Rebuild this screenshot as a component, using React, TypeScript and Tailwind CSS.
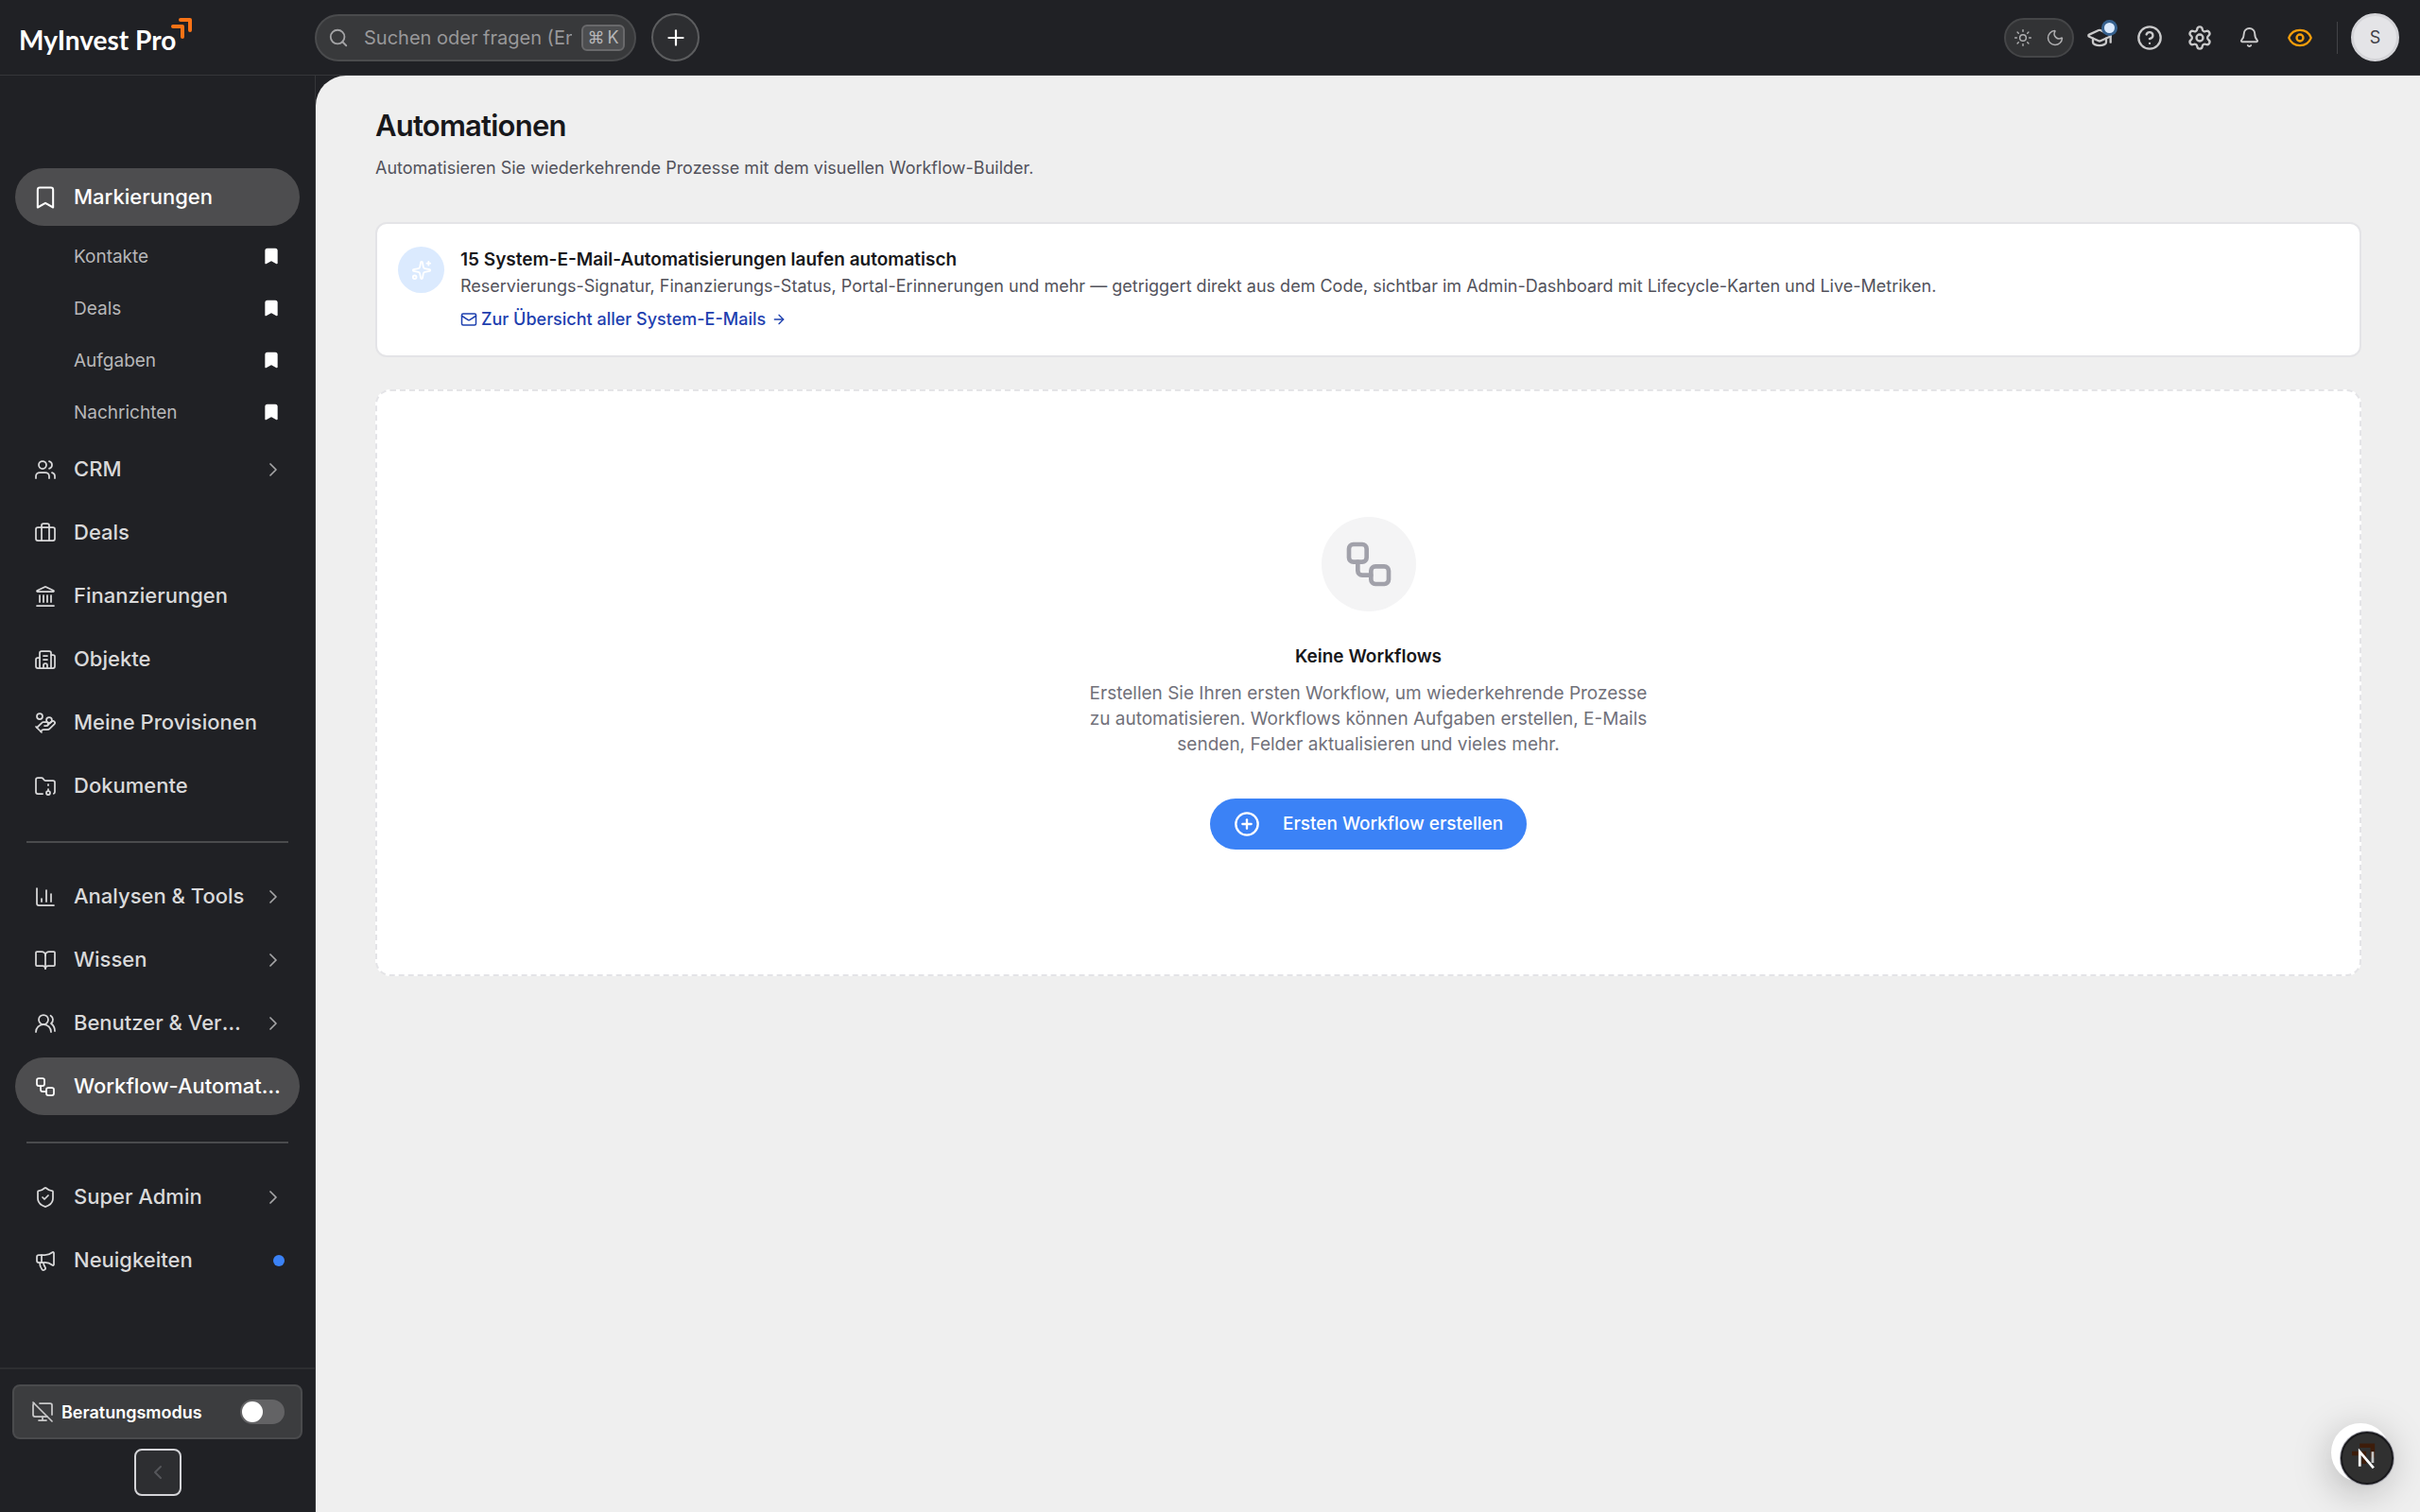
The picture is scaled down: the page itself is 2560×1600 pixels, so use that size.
import React from 'react';
import {
  Bell,
  Bookmark,
  BookOpen,
  Briefcase,
  Building2,
  ChartColumn,
  ChevronLeft,
  ChevronRight,
  ArrowRight,
  CircleQuestionMark,
  CirclePlus,
  Eye,
  FolderArchive,
  GraduationCap,
  HandCoins,
  Landmark,
  Mail,
  Megaphone,
  MonitorOff,
  Moon,
  Plus,
  Search,
  Settings,
  ShieldCheck,
  Sparkles,
  Sun,
  Users,
  UsersRound,
  Workflow,
  type LucideIcon,
} from 'lucide-react';

interface NavItemProps {
  icon: LucideIcon;
  label: string;
  active?: boolean;
  expandable?: boolean;
  dot?: boolean;
  large?: boolean;
}

const bookmarks = ['Kontakte', 'Deals', 'Aufgaben', 'Nachrichten'];

const mainItems: NavItemProps[] = [
  { icon: Users, label: 'CRM', expandable: true },
  { icon: Briefcase, label: 'Deals' },
  { icon: Landmark, label: 'Finanzierungen' },
  { icon: Building2, label: 'Objekte' },
  { icon: HandCoins, label: 'Meine Provisionen' },
  { icon: FolderArchive, label: 'Dokumente' },
];

const toolItems: NavItemProps[] = [
  { icon: ChartColumn, label: 'Analysen & Tools', expandable: true },
  { icon: BookOpen, label: 'Wissen', expandable: true },
  { icon: UsersRound, label: 'Benutzer & Verwaltung', expandable: true },
  { icon: Workflow, label: 'Workflow-Automatisierung', active: true },
];

const adminItems: NavItemProps[] = [
  { icon: ShieldCheck, label: 'Super Admin', expandable: true },
  { icon: Megaphone, label: 'Neuigkeiten', dot: true },
];

const NavItem: React.FC<NavItemProps> = ({ icon: Icon, label, active, expandable, dot, large }) => (
  <button
    className={`flex h-[61px] w-full shrink-0 items-center rounded-full pr-4 pl-[18px] text-left text-[22px] font-medium ${
      active ? 'bg-[#4d4d4f] text-white' : 'text-[#d9d9da]'
    }`}
  >
    <span className="flex w-7 shrink-0 justify-center">
      <Icon className={large ? 'size-7' : 'size-6'} strokeWidth={1.75} />
    </span>
    <span className="ml-4 min-w-0 flex-1 truncate">{label}</span>
    {expandable && <ChevronRight className="ml-2 size-6 shrink-0 text-[#a5a5a7]" strokeWidth={1.75} />}
    {dot && <span className="size-3 shrink-0 rounded-full bg-[#3b82f6]" />}
  </button>
);

const NavGroup: React.FC<{ items: NavItemProps[] }> = ({ items }) => (
  <div className="flex flex-col gap-[6px] px-4">
    {items.map((item) => (
      <NavItem key={item.label} {...item} />
    ))}
  </div>
);

const Logo = () => (
  <a href="#" className="flex w-[333px] shrink-0 items-start pl-5" aria-label="MyInvest Pro">
    <span className="pt-1 font-[Lato,sans-serif] text-[28px] leading-[40px] font-bold text-white">MyInvest Pro</span>
    <svg viewBox="0 0 24 24" className="-ml-[6px] size-6" fill="none" stroke="#f97316" strokeWidth="4" strokeLinejoin="round">
      <path d="M11 3h10v11" strokeLinecap="round" />
      <path d="M3 10h10v11" strokeLinecap="round" />
    </svg>
  </a>
);

const IconButton: React.FC<{ label: string; children: React.ReactNode }> = ({ label, children }) => (
  <button aria-label={label} className="relative flex size-[53px] items-center justify-center text-[#c9c9ca]">
    {children}
  </button>
);

const Header = () => (
  <header className="flex h-20 shrink-0 items-center border-b border-[#353639] bg-[#202125]">
    <Logo />
    <div className="flex h-[50px] w-[340px] items-center rounded-full border-2 border-[#4a4b4d] bg-[#38393b] pr-[10px] pl-3">
      <Search className="size-[22px] shrink-0 text-[#a3a3a5]" />
      <input
        aria-label="Suche"
        placeholder="Suchen oder fragen (Enter)"
        className="ml-4 min-w-0 flex-1 bg-transparent text-[20px] text-white outline-none placeholder:text-[#98989a]"
      />
      <kbd className="ml-[10px] flex h-7 w-[46px] shrink-0 items-center justify-center gap-[3px] rounded-md border-2 border-[#69696b] bg-[#4d4e50] font-[Inter,sans-serif] text-[18px] text-[#b5b5b7]">
        <span>⌘</span>
        <span>K</span>
      </kbd>
    </div>
    <button
      aria-label="Neu"
      className="ml-4 flex size-[51px] items-center justify-center rounded-full border-2 border-[#5c5d5f] bg-[#2d2e31] text-white"
    >
      <Plus className="size-[26px]" />
    </button>
    <div className="ml-auto flex items-center pr-[22px]">
      <button
        aria-label="Farbschema"
        className="flex h-[42px] w-[74px] items-center justify-between rounded-full border-2 border-[#454648] bg-[#323335] px-2 text-[#b0b0b2]"
      >
        <Sun className="size-5" strokeWidth={1.75} />
        <Moon className="size-5" strokeWidth={1.75} />
      </button>
      <div className="flex">
        <IconButton label="Akademie">
          <GraduationCap className="size-7" />
          <span className="absolute top-2 right-[7px] flex size-[17px] items-center justify-center rounded-full bg-[#36618f]">
            <span className="size-[11px] rounded-full bg-[#dbeafe]" />
          </span>
        </IconButton>
        <IconButton label="Hilfe">
          <CircleQuestionMark className="size-7" />
        </IconButton>
        <IconButton label="Einstellungen">
          <Settings className="size-7" />
        </IconButton>
        <IconButton label="Benachrichtigungen">
          <Bell className="size-[23px]" />
        </IconButton>
        <IconButton label="Ansicht">
          <Eye className="size-7 text-[#f59e0b]" />
        </IconButton>
      </div>
      <div className="ml-[13px] h-[34px] w-px bg-[#434447]" />
      <button
        aria-label="Profil"
        className="ml-[14px] flex size-[51px] items-center justify-center rounded-full border-[3px] border-[#d4d4d8] bg-[#e4e4e7] text-[18px] text-[#3f3f46]"
      >
        S
      </button>
    </div>
  </header>
);

const Divider = () => <hr className="mx-7 mt-7 mb-[26px] border-t-2 border-[#4a4b4d]" />;

const Sidebar = () => (
  <aside className="flex w-[334px] shrink-0 flex-col border-r border-[#353639] bg-[#202125]">
    <nav className="flex flex-1 flex-col pt-[98px]">
      <div className="px-4">
        <NavItem icon={Bookmark} label="Markierungen" active large />
      </div>
      <ul className="mt-[6px] mb-[1px]">
        {bookmarks.map((label) => (
          <li key={label}>
            <a href="#" className="flex h-[55px] items-center justify-between pr-9 pl-[78px] text-[19px] text-[#b7b7b9]">
              {label}
              <Bookmark className="mb-1 size-5 fill-white text-white" />
            </a>
          </li>
        ))}
      </ul>
      <NavGroup items={mainItems} />
      <Divider />
      <NavGroup items={toolItems} />
      <Divider />
      <NavGroup items={adminItems} />
    </nav>
    <div className="flex flex-col items-center border-t-2 border-[#2d2e31] px-[13px] pt-4 pb-[17px]">
      <label className="flex h-[58px] w-full items-center rounded-lg border-2 border-[#4a4b4d] bg-[#3c3d3f] pr-[17px] pl-[18px] text-white">
        <MonitorOff className="size-6 text-[#c9c9ca]" strokeWidth={1.75} />
        <span className="ml-2 flex-1 text-[18px] font-semibold">Beratungsmodus</span>
        <input type="checkbox" role="switch" className="peer sr-only" />
        <span className="flex h-[26px] w-[47px] items-center rounded-full bg-[#636365] px-[2px] peer-checked:justify-end">
          <span className="size-[22px] rounded-full bg-white" />
        </span>
      </label>
      <button
        aria-label="Seitenleiste einklappen"
        className="mt-[10px] flex size-[50px] items-center justify-center rounded-lg border-2 border-[#d4d4d8] bg-[#2d2e31] text-[#55565a]"
      >
        <ChevronLeft className="size-6" />
      </button>
    </div>
  </aside>
);

const SystemMailCard = () => (
  <section className="mt-[43px] flex items-start rounded-xl border-2 border-[#e4e4e7] bg-white px-[22px] pt-6 pb-6">
    <div className="flex size-[49px] shrink-0 items-center justify-center rounded-full bg-[#dbeafe] text-white">
      <Sparkles className="size-[22px]" />
    </div>
    <div className="ml-[17px] min-w-0">
      <h2 className="text-[19px] leading-[28px] font-semibold text-[#18181b]">
        15 System-E-Mail-Automatisierungen laufen automatisch
      </h2>
      <p className="text-[18px] leading-[28px] text-[#52525b]">
        Reservierungs-Signatur, Finanzierungs-Status, Portal-Erinnerungen und mehr — getriggert direkt aus dem Code,
        sichtbar im Admin-Dashboard mit Lifecycle-Karten und Live-Metriken.
      </p>
      <a href="#" className="mt-[7px] flex items-center text-[18px] leading-[28px] font-medium text-[#1e40af]">
        <Mail className="size-[18px]" />
        <span className="ml-1">Zur Übersicht aller System-E-Mails</span>
        <ArrowRight className="ml-[6px] size-4" />
      </a>
    </div>
  </section>
);

const EmptyState = () => (
  <section className="mt-[34px] flex flex-col items-center rounded-2xl border-2 border-dashed border-[#e4e4e7] bg-white pt-[133px] pb-[132px]">
    <div className="flex size-[100px] items-center justify-center rounded-full bg-[#f4f4f5] text-[#a1a1aa]">
      <Workflow className="size-14" />
    </div>
    <h2 className="mt-[33px] text-[19px] leading-[30px] font-semibold text-[#18181b]">Keine Workflows</h2>
    <p className="mt-[10px] w-[610px] text-center text-[19px] leading-[27px] text-[#71717a]">
      Erstellen Sie Ihren ersten Workflow, um wiederkehrende Prozesse zu automatisieren. Workflows können Aufgaben
      erstellen, E-Mails senden, Felder aktualisieren und vieles mehr.
    </p>
    <button className="mt-[44px] flex h-[54px] items-center rounded-full bg-[#3b82f6] px-[25px] text-[19px] font-medium text-white">
      <CirclePlus className="size-7" />
      <span className="ml-6">Ersten Workflow erstellen</span>
    </button>
  </section>
);

const FloatingBadge = () => (
  <div className="fixed right-8 bottom-8 size-[62px]">
    <div className="size-[62px] rounded-full bg-white shadow-[0_10px_40px_rgba(0,0,0,0.25)]" />
    <button
      aria-label="Next.js Dev Tools"
      className="absolute top-[9px] left-[10px] flex size-[56px] items-center justify-center rounded-full border-2 border-[#18181b] bg-[#303030] ring-1 ring-[#a1a1aa]"
    >
      <svg viewBox="0 0 57 57" className="size-full" fill="none">
        <path d="M20 14h15v14M11 23h14v12" stroke="#3d1c0a" strokeWidth="5" />
        <path d="M20 38V21l16 19" stroke="#fff" strokeWidth="3" />
        <path d="M35 21v13" stroke="#c4c4c4" strokeWidth="3" />
      </svg>
    </button>
  </div>
);

const App: React.FC = () => (
  <div className="flex h-screen flex-col overflow-hidden bg-[#202125] font-[Inter,sans-serif]">
    <Header />
    <div className="flex min-h-0 flex-1">
      <Sidebar />
      <main className="min-w-0 flex-1 overflow-hidden rounded-tl-[32px] bg-[#efefef] pt-8 pr-[62px] pl-[63px]">
        <h1 className="text-[31px] leading-[42px] font-semibold tracking-tight text-[#18181b]">Automationen</h1>
        <p className="mt-[10px] text-[18px] leading-[28px] text-[#52525b]">
          Automatisieren Sie wiederkehrende Prozesse mit dem visuellen Workflow-Builder.
        </p>
        <SystemMailCard />
        <EmptyState />
      </main>
    </div>
    <FloatingBadge />
  </div>
);

export default App;
